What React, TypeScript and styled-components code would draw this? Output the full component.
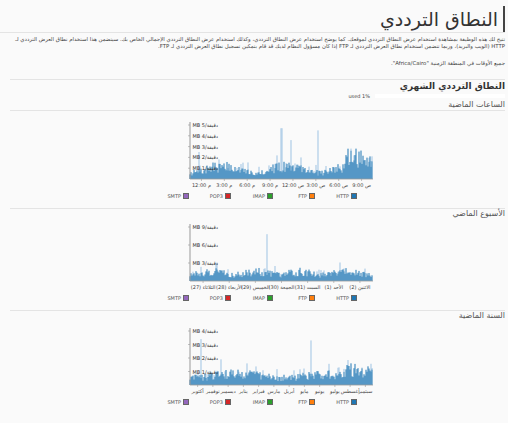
import React from "react";
import styled, { createGlobalStyle } from "styled-components";

const Global = createGlobalStyle`
  html, body { margin: 0; padding: 0; background: #fafafa; overflow: hidden; }
  body { font-family: "DejaVu Sans", "Noto Sans", sans-serif; color: #333; }
`;

const Page = styled.div`
  direction: rtl;
  width: 508px;
  height: 423px;
  overflow: hidden;
  padding-right: 3px;
  box-sizing: border-box;
`;
const Title = styled.h1`
  margin: 6px 0 0 0;
  font-size: 19px;
  font-weight: normal;
  line-height: 26px;
  padding-right: 5px;
  border-right: 2px solid #444;
  color: #333;
`;
const Rule = styled.div<{ $indent?: number; $top?: number }>`
  height: 1px;
  background: #e4e4e4;
  margin-left: ${(p) => p.$indent ?? 0}px;
  margin-top: ${(p) => p.$top ?? 0}px;
`;
const Para = styled.p<{ $top: number }>`
  margin: ${(p) => p.$top}px 0 0 0;
  font-size: 5.4px;
  line-height: 7px;
  color: #444;
`;
const SectionTitle = styled.h2`
  margin: 1px 0 0 0;
  font-size: 9px;
  font-weight: bold;
  line-height: 11px;
  color: #333;
`;
const UsedRow = styled.div`
  display: flex;
  align-items: center;
  gap: 5px;
  height: 8px;
`;
const UsedBar = styled.div`
  width: 130px;
  height: 4px;
  background: #fff;
`;
const UsedText = styled.span`
  font-size: 5px;
  color: #444;
  direction: ltr;
`;
const SubTitle = styled.div`
  font-size: 8px;
  line-height: 10px;
  color: #555;
`;
const ChartBox = styled.div<{ $top: number }>`
  padding-right: 127px;
  display: flex;
  margin-top: ${(p) => p.$top}px;
`;
const Legend = styled.div`
  display: flex;
  padding-right: 148px;
  margin-top: 2px;
  height: 8px;
`;
const LegendItem = styled.div`
  width: 42px;
  display: flex;
  align-items: center;
  gap: 2px;
  font-size: 5px;
  color: #555;
`;
const Swatch = styled.span<{ $c: string }>`
  width: 4px;
  height: 4px;
  background: ${(p) => p.$c};
  border: 0.5px solid #666;
`;

function rng(seed: number) {
  let s = seed;
  return () => {
    s = (s * 1664525 + 1013904223) % 4294967296;
    return s / 4294967296;
  };
}

type ChartProps = {
  seed: number;
  ticks: string[];
  yLabels: number[];
  base: (t: number) => number;
  spikes: [number, number][];
};

function Chart({ seed, ticks, yLabels, base, spikes }: ChartProps) {
  const r = rng(seed);
  const x0 = 17, x1 = 200, top = 4, bot = 61;
  const n = x1 - x0;
  const maxY = yLabels[yLabels.length - 1];
  const scale = (bot - top - 3) / maxY;
  const dark: string[] = [];
  const light: string[] = [];
  for (let i = 0; i < n; i++) {
    const t = i / n;
    const v = base(t) * (0.5 + r() * 0.9);
    const h = Math.max(1, v * scale);
    let lh = h + (r() < 0.15 ? r() * 8 : 0);
    const sp = spikes.find((s) => Math.abs(s[0] - t) < 0.003);
    if (sp) lh = sp[1] * scale;
    const x = x0 + i;
    dark.push(`M${x} ${bot}V${bot - h}`);
    if (lh > h) light.push(`M${x} ${bot - h}V${bot - lh}`);
  }
  const tickStep = n / ticks.length;
  return (
    <svg width="205" height="72" style={{ direction: "ltr" }}>
      <path d={light.join("")} stroke="#9ec3e3" strokeWidth="1" />
      <path d={dark.join("")} stroke="#1f77b4" strokeWidth="1" />
      <line x1={x0} y1={top} x2={x0} y2={bot} stroke="#999" strokeWidth="1" />
      <line x1={x0} y1={bot} x2={x1} y2={bot} stroke="#999" strokeWidth="0.8" />
      {yLabels.map((v) => {
        const y = bot - v * scale;
        return (
          <g key={v}>
            <line x1={x0 - 2} y1={y} x2={x0} y2={y} stroke="#999" strokeWidth="0.6" />
            <text x={x0 + 28} y={y + 2} fontSize="5" textAnchor="end" fill="#333" fontFamily="DejaVu Sans">
              {`MB ${v}/دقيقة`}
            </text>
          </g>
        );
      })}
      {ticks.map((tk, i) => {
        const x = x0 + tickStep * (i + 0.5);
        return (
          <g key={i}>
            <line x1={x} y1={bot} x2={x} y2={bot + 2} stroke="#999" strokeWidth="0.6" />
            <text x={x} y={bot + 8} fontSize="5" textAnchor="middle" fill="#444" fontFamily="DejaVu Sans">
              {tk}
            </text>
          </g>
        );
      })}
    </svg>
  );
}

function LegendRow() {
  const items: [string, string][] = [
    ["HTTP", "#1f77b4"],
    ["FTP", "#ff7f0e"],
    ["IMAP", "#2ca02c"],
    ["POP3", "#d62728"],
    ["SMTP", "#9467bd"],
  ];
  return (
    <Legend>
      {items.map(([l, c]) => (
        <LegendItem key={l}>
          <Swatch $c={c} />
          <span>{l}</span>
        </LegendItem>
      ))}
    </Legend>
  );
}

export default function App() {
  return (
    <>
      <Global />
      <Page>
        <Title>النطاق الترددي</Title>
        <Rule />
        <Para $top={3}>
          تتيح لك هذه الوظيفة بمشاهدة استخدام عرض النطاق الترددي لموقعك. كما يوضح استخدام عرض النطاق الترددي، وكذلك استخدام عرض النطاق الترددي الإجمالي الخاص بك. سيتضمن هذا استخدام نطاق العرض الترددي لـ HTTP (الويب والبريد)، وربما تتضمن استخدام نطاق العرض الترددي لـ FTP إذا كان مسؤول النظام لديك قد قام بتمكين تسجيل نطاق العرض الترددي لـ FTP.
        </Para>
        <Para $top={10}>جميع الأوقات في المنطقة الزمنية "Africa/Cairo".</Para>
        <Rule $indent={10} $top={12} />
        <SectionTitle>النطاق الترددي الشهري</SectionTitle>
        <UsedRow>
          <UsedBar />
          <UsedText>used 1%</UsedText>
        </UsedRow>
        <SubTitle>الساعات الماضية</SubTitle>
        <Rule $indent={10} />
        <ChartBox $top={7}>
          <Chart
            seed={7}
            yLabels={[1, 2, 3, 4, 5]}
            ticks={["12:00 م", "3:00 م", "6:00 م", "9:00 م", "12:00 ص", "3:00 ص", "6:00 ص", "9:00 ص"]}
            base={(t) => 0.6 + 0.6 * Math.sin(t * 9) ** 2 + (t > 0.85 ? 0.9 : 0)}
            spikes={[[0.5, 4.7], [0.55, 3.6], [0.7, 4.5], [0.05, 2.5]]}
          />
        </ChartBox>
        <LegendRow />
        <Rule $indent={10} $top={8} />
        <SubTitle>الأسبوع الماضي</SubTitle>
        <ChartBox $top={1}>
          <Chart
            seed={13}
            yLabels={[3, 6, 9]}
            ticks={["(27) الثلاثاء", "(28) الأربعاء", "(29) الخميس", "(30) الجمعة", "(31) السبت", "(1) الأحد", "(2) الاثنين"]}
            base={(t) => 1.1 + 0.5 * Math.sin(t * 13) ** 2}
            spikes={[[0.42, 7.8], [0.14, 3.0]]}
          />
        </ChartBox>
        <LegendRow />
        <Rule $indent={10} $top={8} />
        <SubTitle>السنة الماضية</SubTitle>
        <ChartBox $top={3}>
          <Chart
            seed={29}
            yLabels={[1, 2, 3, 4]}
            ticks={["أكتوبر", "نوفمبر", "ديسمبر", "يناير", "فبراير", "مارس", "أبريل", "مايو", "يونيو", "يوليو", "أغسطس", "سبتمبر"]}
            base={(t) => 0.55 + 0.3 * Math.sin(t * 6) ** 2 + (t > 0.85 ? 0.4 : 0)}
            spikes={[[0.66, 3.3], [0.06, 3.4], [0.31, 1.6], [0.17, 1.9]]}
          />
        </ChartBox>
        <LegendRow />
      </Page>
    </>
  );
}
